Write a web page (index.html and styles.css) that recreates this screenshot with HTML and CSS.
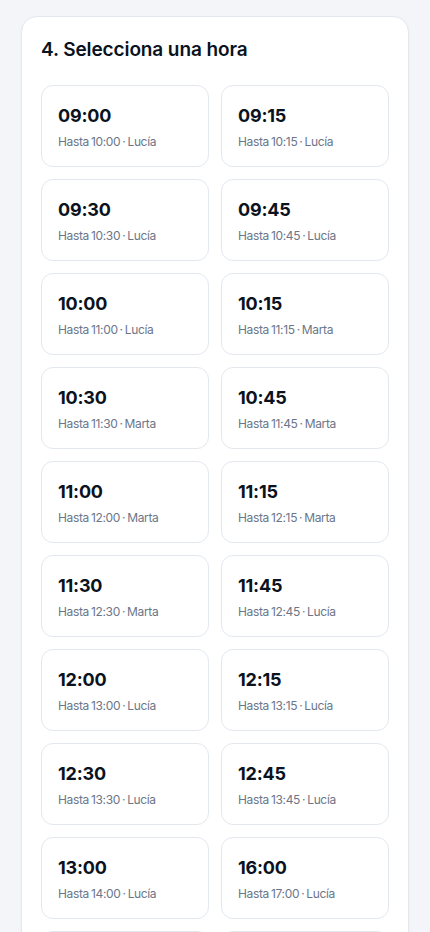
FILE: index.html
```html
<!DOCTYPE html>
<html lang="es">
<head>
  <meta charset="UTF-8">
  <title>Reservar cita</title>
  <link rel="stylesheet" href="styles.css">
</head>
<body>
  <div class="page">
    <section class="step-card">
      <h2 class="step-title">4. Selecciona una hora</h2>

      <!-- Horas disponibles -->
      <div class="slots">
        <button class="slot"><span class="slot-time">09:00</span><span class="slot-info">Hasta 10:00 · Lucía</span></button>
        <button class="slot"><span class="slot-time">09:15</span><span class="slot-info">Hasta 10:15 · Lucía</span></button>
        <button class="slot"><span class="slot-time">09:30</span><span class="slot-info">Hasta 10:30 · Lucía</span></button>
        <button class="slot"><span class="slot-time">09:45</span><span class="slot-info">Hasta 10:45 · Lucía</span></button>
        <button class="slot"><span class="slot-time">10:00</span><span class="slot-info">Hasta 11:00 · Lucía</span></button>
        <button class="slot"><span class="slot-time">10:15</span><span class="slot-info">Hasta 11:15 · Marta</span></button>
        <button class="slot"><span class="slot-time">10:30</span><span class="slot-info">Hasta 11:30 · Marta</span></button>
        <button class="slot"><span class="slot-time">10:45</span><span class="slot-info">Hasta 11:45 · Marta</span></button>
        <button class="slot"><span class="slot-time">11:00</span><span class="slot-info">Hasta 12:00 · Marta</span></button>
        <button class="slot"><span class="slot-time">11:15</span><span class="slot-info">Hasta 12:15 · Marta</span></button>
        <button class="slot"><span class="slot-time">11:30</span><span class="slot-info">Hasta 12:30 · Marta</span></button>
        <button class="slot"><span class="slot-time">11:45</span><span class="slot-info">Hasta 12:45 · Lucía</span></button>
        <button class="slot"><span class="slot-time">12:00</span><span class="slot-info">Hasta 13:00 · Lucía</span></button>
        <button class="slot"><span class="slot-time">12:15</span><span class="slot-info">Hasta 13:15 · Lucía</span></button>
        <button class="slot"><span class="slot-time">12:30</span><span class="slot-info">Hasta 13:30 · Lucía</span></button>
        <button class="slot"><span class="slot-time">12:45</span><span class="slot-info">Hasta 13:45 · Lucía</span></button>
        <button class="slot"><span class="slot-time">13:00</span><span class="slot-info">Hasta 14:00 · Lucía</span></button>
        <button class="slot"><span class="slot-time">16:00</span><span class="slot-info">Hasta 17:00 · Lucía</span></button>
        <button class="slot"><span class="slot-time">16:15</span><span class="slot-info">Hasta 17:15 · Lucía</span></button>
        <button class="slot"><span class="slot-time">16:30</span><span class="slot-info">Hasta 17:30 · Lucía</span></button>
      </div>
    </section>
  </div>
</body>
</html>
```

FILE: styles.css
```css
body {
  margin: 0;
  background-color: #f3f5f9;
  font-family: Inter, "Noto Sans", sans-serif;
  color: #0b1220;
}

.page {
  padding: 16px 21px;
}

.step-card {
  background-color: #fff;
  border: 1px solid #e3e8ef;
  border-radius: 16px;
  padding: 19px 19px 24px;
  box-shadow: 0 1px 3px rgba(15, 23, 42, 0.04);
}

.step-title {
  margin: 0 0 21px;
  font-size: 19px;
  line-height: 28px;
  font-weight: 600;
  letter-spacing: -0.1px;
}

.slots {
  display: grid;
  grid-template-columns: 1fr 1fr;
  gap: 12px;
}

.slot {
  display: flex;
  flex-direction: column;
  align-items: flex-start;
  padding: 18px 16px 15px;
  background-color: #fff;
  border: 1px solid #e3e8ef;
  border-radius: 12px;
  font-family: inherit;
  text-align: left;
  cursor: pointer;
}

.slot-time {
  font-size: 18px;
  line-height: 24px;
  font-weight: 700;
  color: #0b1220;
  letter-spacing: -0.2px;
}

.slot-info {
  margin-top: 5px;
  font-size: 12px;
  line-height: 18px;
  color: #6b7689;
  letter-spacing: -0.35px;
  word-spacing: -1px;
}
```
